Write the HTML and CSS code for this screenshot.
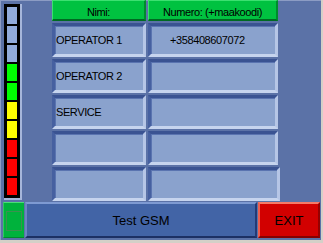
FILE: index.html
```html
<!DOCTYPE html>
<html>
<head>
<meta charset="utf-8">
<title>Numerot</title>
<link rel="stylesheet" href="styles.css">
</head>
<body>
<div class="screen">
  <div class="top">
    <!-- signal meter -->
    <div class="meter">
      <div class="cell off"></div>
      <div class="cell off"></div>
      <div class="cell off"></div>
      <div class="cell green"></div>
      <div class="cell green"></div>
      <div class="cell yellow"></div>
      <div class="cell yellow"></div>
      <div class="cell red"></div>
      <div class="cell red"></div>
      <div class="cell red"></div>
    </div>

    <!-- numbers table -->
    <div class="numbers">
      <div class="head">Nimi:</div>
      <div class="head">Numero: (+maakoodi)</div>

      <div class="field">OPERATOR 1</div>
      <div class="field num">+358408607072</div>

      <div class="field">OPERATOR 2</div>
      <div class="field num"></div>

      <div class="field">SERVICE</div>
      <div class="field num"></div>

      <div class="field"></div>
      <div class="field num"></div>

      <div class="field"></div>
      <div class="field num wide"></div>
    </div>
  </div>

  <div class="bar">
    <div class="btn ok"><span class="okInner"></span></div>
    <div class="btn test">Test GSM</div>
    <div class="btn exit">EXIT</div>
  </div>
</div>
</body>
</html>
```

FILE: styles.css
```css
body {
  margin: 0;
  background-color: #d4d0c8;
  font-family: "Liberation Sans", Arial, sans-serif;
  color: #000;
}

.screen {
  width: 321px;
  height: 240px;
  background-color: #5b72a7;
  box-shadow: inset 1px 1px 0 #8c9cc4;
  display: flex;
  flex-direction: column;
}

.top {
  display: flex;
  height: 202px;
}

/* signal meter */
.meter {
  margin: 4px 0 0 4px;
  width: 10px;
  height: 188px;
  padding: 3px;
  background-color: #000;
  border-right: 2px solid #a6b6da;
  border-bottom: 2px solid #a6b6da;
  display: flex;
  flex-direction: column;
  gap: 2px;
}

.cell {
  height: 17px;
  flex: none;
}

.cell.off { background-color: #92acdc; }
.cell.green { background-color: #00ff00; }
.cell.yellow { background-color: #ffff00; }
.cell.red { background-color: #ff0000; }

/* table of names and numbers */
.numbers {
  margin-left: 30px;
  display: grid;
  grid-template-columns: 94px 130px;
  grid-template-rows: 21px repeat(5, 34px);
  column-gap: 2px;
  row-gap: 2px;
}

.head {
  box-sizing: border-box;
  background-color: #00c240;
  border-top: 1px solid #3ce070;
  border-left: 1px solid #3ce070;
  border-right: 2px solid #008c2c;
  border-bottom: 2px solid #006a22;
  font-size: 11px;
  letter-spacing: -0.4px;
  display: flex;
  align-items: center;
  justify-content: center;
  padding-top: 3px;
}

.field {
  box-sizing: border-box;
  background-color: #8aa2cd;
  border: 3px solid;
  border-color: #3a5392 #b6c6e6 #c6d4ee #4660a0;
  box-shadow: inset 1px 1px 0 #5a74b0;
  font-size: 11px;
  letter-spacing: -0.4px;
  display: flex;
  align-items: center;
  padding-left: 1px;
}

.field.num {
  padding-left: 19px;
}

.field.wide {
  margin-right: -2px;
}

/* bottom buttons */
.bar {
  display: flex;
  height: 36px;
  padding-left: 3px;
  gap: 1px;
}

.btn {
  box-sizing: border-box;
  display: flex;
  align-items: center;
  justify-content: center;
  font-size: 13px;
}

.ok {
  width: 21px;
  background-color: #00b23c;
  border-top: 1px solid #4cdc78;
  border-left: 1px solid #30c860;
  border-bottom: 1px solid #008a2c;
  padding-top: 2px;
}

.okInner {
  width: 14px;
  height: 18px;
  border: 1px solid #3c9050;
}

.test {
  width: 232px;
  background-color: #4264a6;
  border: 2px solid;
  border-color: #7e9ad2 #243a76 #1c3064 #6a86c2;
}

.exit {
  width: 62px;
  background-color: #d20000;
  border: 2px solid;
  border-color: #f47a68 #960000 #860000 #ee5e4e;
}
```
